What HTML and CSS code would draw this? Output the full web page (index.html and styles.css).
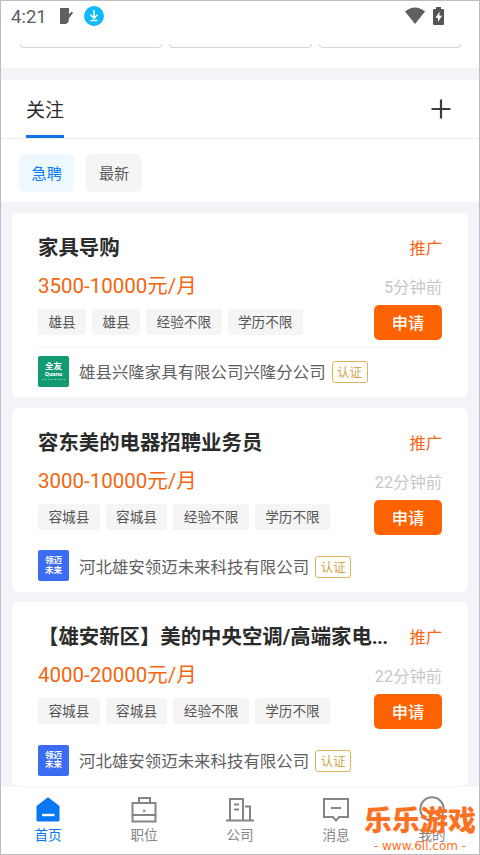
FILE: index.html
```html
<!DOCTYPE html>
<html lang="zh-CN">
<head>
<meta charset="utf-8">
<title>首页</title>
<link rel="stylesheet" href="styles.css">
</head>
<body>
<div class="screen">
  <header class="status">
    <span class="clock">4:21</span>
    <svg class="note" width="14" height="18" viewBox="0 0 14 18"><path fill="#606060" d="M1 1h9v6l3-2.500 1 1.500-4 5-.5 4L7 17H1z"/></svg>
    <svg class="download" width="20" height="20" viewBox="0 0 20 20"><circle cx="10" cy="10" r="10" fill="#10b9fb"/><path d="M10 4v8M6.500 8.700l3.500 3.500 3.500-3.500M6.500 14.500h7" fill="none" stroke="#fff" stroke-width="1.600"/></svg>
    <svg class="wifi" width="20" height="17" viewBox="0 0 20 17"><path fill="#606060" d="M0 4.500Q10-3.500 20 4.500L10 17z"/></svg>
    <svg class="battery" width="11" height="18" viewBox="0 0 11 18"><path fill="#555" d="M3 0h5v2h2q1 0 1 1v14q0 1-1 1H1q-1 0-1-1V3q0-1 1-1h2z"/><path fill="#fff" d="M6.500 4.500 2.500 11h2.500v4L9 8.800H6.500z"/></svg>
  </header>
  <section class="stubs"><i></i><i></i><i></i></section>
  <section class="tabs">
    <span class="tab">关注</span>
    <svg width="20" height="20" viewBox="0 0 20 20"><path d="M10 .5v19M.5 10h19" stroke="#3c3c3c" stroke-width="2.200"/></svg>
  </section>
  <section class="filters"><span class="chip active">急聘</span><span class="chip">最新</span></section>
  <main class="list">
    <article class="card">
      <div class="head"><h2>家具导购</h2><span class="promo">推广</span></div>
      <div class="body">
        <div class="info"><div class="salary">3500-10000元/月</div>
          <div class="tags"><span>雄县</span><span>雄县</span><span>经验不限</span><span>学历不限</span></div></div>
        <div class="action"><time>5分钟前</time><button>申请</button></div>
      </div>
      <div class="company lined"><div class="logo green"><b>全友</b><em>Quanu</em><small>▪▪▪▪ ▪▪▪▪</small></div><span class="name">雄县兴隆家具有限公司兴隆分公司</span><span class="badge">认证</span></div>
    </article>
    <article class="card">
      <div class="head"><h2>容东美的电器招聘业务员</h2><span class="promo">推广</span></div>
      <div class="body">
        <div class="info"><div class="salary">3000-10000元/月</div>
          <div class="tags"><span>容城县</span><span>容城县</span><span>经验不限</span><span>学历不限</span></div></div>
        <div class="action"><time>22分钟前</time><button>申请</button></div>
      </div>
      <div class="company"><div class="logo blue"><b>领迈</b><b>未来</b></div><span class="name">河北雄安领迈未来科技有限公司</span><span class="badge">认证</span></div>
    </article>
    <article class="card">
      <div class="head"><h2>【雄安新区】美的中央空调/高端家电<span class="dots">...</span></h2><span class="promo">推广</span></div>
      <div class="body">
        <div class="info"><div class="salary">4000-20000元/月</div>
          <div class="tags"><span>容城县</span><span>容城县</span><span>经验不限</span><span>学历不限</span></div></div>
        <div class="action"><time>22分钟前</time><button>申请</button></div>
      </div>
      <div class="company"><div class="logo blue"><b>领迈</b><b>未来</b></div><span class="name">河北雄安领迈未来科技有限公司</span><span class="badge">认证</span></div>
    </article>
  </main>
  <nav class="nav">
    <a class="on"><svg width="28" height="28" viewBox="0 0 28 28"><path fill="#0878f5" d="M14 2.300 25.500 11v14q0 1.500-1.500 1.500H4q-1.500 0-1.500-1.500V11z"/><path d="M8 20h12.500" stroke="#fff" stroke-width="2.400"/></svg>首页</a>
    <a><svg width="28" height="28" viewBox="0 0 28 28" fill="none" stroke="#858585" stroke-width="2"><path d="M2.500 8h23v18.500h-23zM9 8V3h11v5M2.500 20h23"/><path d="M13 15.800h2.500"/></svg>职位</a>
    <a><svg width="28" height="28" viewBox="0 0 28 28" fill="none" stroke="#858585" stroke-width="2"><path d="M4 25V4h13v21M19 11.500h5V25M0 25.500h28M8 9.500h5M8 14.500h5"/></svg>公司</a>
    <a><svg width="28" height="28" viewBox="0 0 28 28" fill="none" stroke="#858585" stroke-width="2"><path d="M2 4h24v18h-9l-3 3.500-3-3.500H2zM9 13h10"/></svg>消息</a>
    <a><svg width="28" height="28" viewBox="0 0 28 28" fill="none" stroke="#858585" stroke-width="2"><circle cx="14" cy="14" r="11.700"/><path d="M8 15q6 8 12 0"/></svg>我的</a>
  </nav>
  <div class="mark"><strong>乐乐游戏</strong><span>- www.6ll.com -</span></div>
</div>
</body>
</html>
```
FILE: styles.css
```css
* { box-sizing: border-box; }
body { margin: 0; font-family: Roboto, "Noto Sans CJK SC", sans-serif; color: #2b2b2b; }
.screen { position: relative; width: 480px; height: 855px; overflow: hidden; display: flex; flex-direction: column; background: #fff; border: 1px solid #bdbdc1; }
.screen > * { flex-shrink: 0; }
.status { height: 43px; padding: 5px 35px 0 10px; display: flex; align-items: flex-start; }
.clock { width: 48px; font-size: 18.500px; line-height: 22px; color: #606060; }
.note { margin-top: 1px; }
.download { margin-left: 11px; }
.wifi { margin: 1px 8px 0 auto; }
.battery { margin-top: 1px; }
.stubs { height: 24px; padding: 0 18px 0 19px; display: flex; gap: 7px; }
.stubs i { flex: 1; height: 4px; border: solid #d5d5d5; border-width: 0 1px 1px; border-radius: 0 0 4px 4px; }
.tabs { height: 71px; border-top: 12px solid #f2f4f7; border-bottom: 1px solid #eee; padding: 0 28px 0 25px; display: flex; justify-content: space-between; align-items: center; }
.tab { height: 58px; padding-top: 2px; border-bottom: 3px solid #0f74ea; font-size: 19px; line-height: 58px; }
.filters { height: 63px; padding: 15px 18px 0; display: flex; gap: 12px; }
.chip { width: 55.400px; height: 38px; border-radius: 5px; background: #f5f5f5; color: #5b5b5b; font-size: 15.200px; line-height: 40px; text-align: center; }
.active { background: #eff7ff; color: #087cf7; }
.list { height: 585px; padding: 11px 11px 0; background: #f2f4f7; overflow: hidden; }
.card { height: 184px; margin-bottom: 10.700px; padding: 20px 26px 0; background: #fff; border-radius: 6px; }
.head { height: 30px; display: flex; justify-content: space-between; line-height: 30px; white-space: nowrap; }
h2 { margin: 0; font-size: 20.400px; font-weight: 700; line-height: 31px; font-family: Roboto, "Noto Sans CJK SC", sans-serif; }
.dots { letter-spacing: -.7px; }
.promo { color: #f96412; font-size: 16.300px; line-height: 32px; }
.body { height: 77px; padding-top: 6px; display: flex; justify-content: space-between; }
.salary { height: 40px; color: #f4650f; font-size: 20.500px; line-height: 35px; }
.tags { display: flex; gap: 6px; }
.tags span { height: 26px; padding: 0 10.400px; background: #f5f5f5; border-radius: 2px; color: #555; font-size: 13.650px; line-height: 27px; white-space: nowrap; }
.action { display: flex; flex-direction: column; align-items: flex-end; }
time { height: 36px; color: #c7c7c7; font-size: 16.300px; line-height: 37px; }
button { width: 68px; height: 35px; padding: 0; border: 0; border-radius: 5px; background: #ff6200; color: #fff; font: 500 16.300px/33px "Noto Sans CJK SC", sans-serif; }
.company { height: 48px; margin-top: 6px; padding-top: 1px; border-top: 1px solid #fff; display: flex; align-items: center; }
.lined { border-color: #f4f4f4; }
.logo { width: 31px; height: 31px; margin-right: 10px; border-radius: 2px; color: #fff; display: flex; flex-direction: column; align-items: center; }
.logo b { font-size: 8.500px; line-height: 9.500px; }
.green { background: #129a72; padding-top: 6px; }
.green em { font: bold 6px/6px Roboto, sans-serif; }
.green small { font-size: 3px; line-height: 7px; }
.blue { background: #3b6cf2; padding-top: 6px; }
.name { color: #606060; font-size: 16.450px; }
.badge { width: 36px; height: 22px; margin: 2px 0 0 6px; border: 1px solid #dfb35a; border-radius: 3px; color: #d7a64c; font-size: 12.500px; line-height: 21px; text-align: center; }
.nav { height: 67px; display: flex; }
.nav a { flex: 0 0 96px; padding-top: 8px; margin-left: -1px; margin-right: 1px; display: flex; flex-direction: column; align-items: center; color: #858585; font-size: 13.600px; line-height: 25px; }
.nav .on { color: #0878f5; }
.mark { position: absolute; left: 360px; top: 800px; width: 118px; color: #ff7122; text-align: center; white-space: nowrap; }
.mark strong { display: block; font: 900 28px/37px "Noto Sans CJK SC", sans-serif; }
.mark span { display: block; font: 500 12px/16px "DejaVu Sans", sans-serif; }
```
